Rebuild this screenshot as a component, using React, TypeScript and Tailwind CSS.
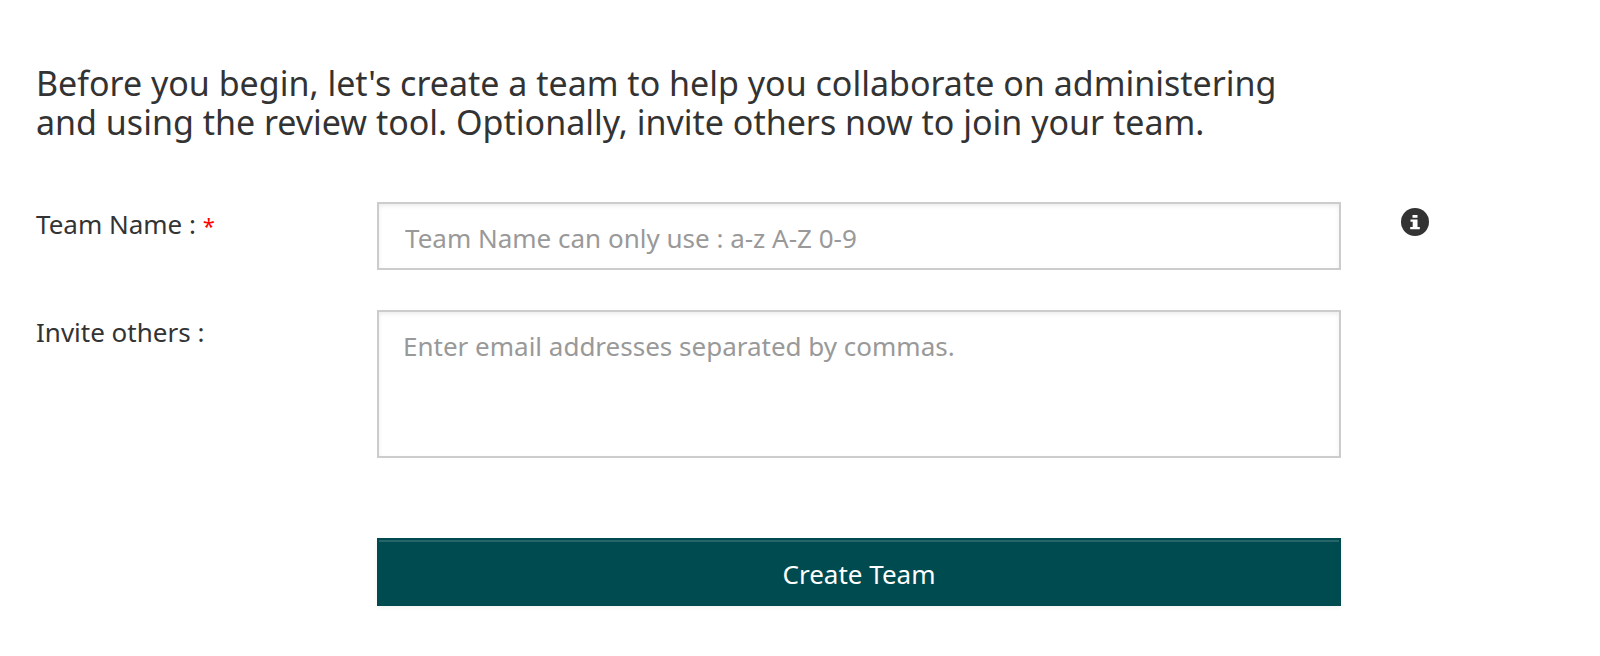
export default function App() {
  return (
    <main className="min-h-screen bg-white pt-16 pb-12 pl-9 font-['Noto_Sans',sans-serif] text-[26px] leading-10 text-[#333333]">
      <h1 className="max-w-[1280px] text-[34px] leading-[39px]">
        Before you begin, let's create a team to help you collaborate on administering and using the review tool.
        Optionally, invite others now to join your team.
      </h1>
      <form className="mt-[60px] grid grid-cols-[341fr_964fr_259fr] items-start" onSubmit={(e) => e.preventDefault()}>
        <label htmlFor="team-name" className="pt-0.5">
          Team Name : <span className="text-[22px] text-[#ff0000]">*</span>
        </label>
        <input
          id="team-name"
          type="text"
          required
          placeholder="Team Name can only use : a-z A-Z 0-9"
          className="h-[68px] w-full border-2 border-[#cccccc] px-[26px] pt-1 shadow-[inset_0_2px_4px_rgba(0,0,0,0.075)] outline-none placeholder:text-[#999999]"
        />
        <button type="button" aria-label="Team name help" className="mt-1.5 ml-[60px] size-7">
          <svg viewBox="0 0 28 28" className="size-7" aria-hidden="true">
            <circle cx="14" cy="14" r="14" fill="#333333" />
            <path d="M11.5 7h5v2.8h-5zM9.5 11.5h7v7.5h2.3v2.3h-9.6v-2.3h2.5v-5.2h-2.2z" fill="#ffffff" />
          </svg>
        </button>

        <label htmlFor="invite-others" className="mt-10 pt-0.5">
          Invite others :
        </label>
        <textarea
          id="invite-others"
          placeholder="Enter email addresses separated by commas."
          className="mt-10 block h-[148px] w-full resize-none border-2 border-[#cccccc] px-6 pt-3.5 shadow-[inset_0_2px_4px_rgba(0,0,0,0.075)] outline-none placeholder:text-[#999999]"
        />

        <button
          type="submit"
          className="col-start-2 mt-20 h-[68px] border-2 border-[#004b50] bg-[#004b50] pt-1 text-white shadow-[inset_0_2px_0_rgba(255,255,255,0.15),0_2px_4px_rgba(0,0,0,0.05)]"
        >
          Create Team
        </button>
      </form>
    </main>
  );
}
